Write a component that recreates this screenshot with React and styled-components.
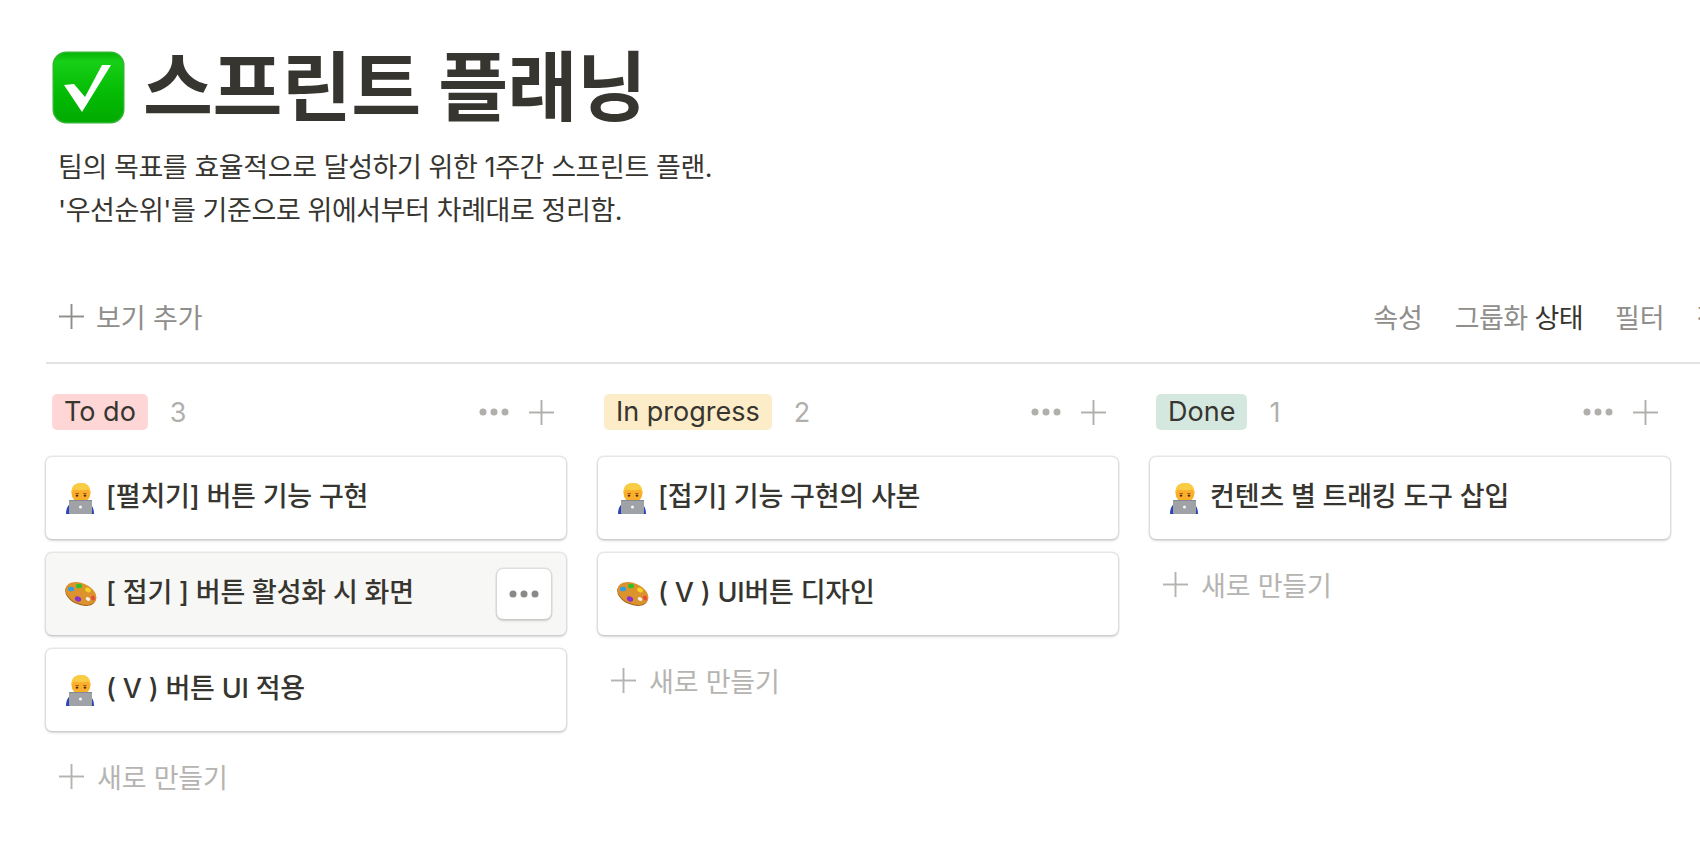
import React from 'react'
import styled, { createGlobalStyle } from 'styled-components'

const GlobalStyle = createGlobalStyle`
  html, body {
    margin: 0;
    padding: 0;
    background: #fff;
    overflow: hidden;
  }
  body {
    font-family: Inter, "Noto Sans CJK KR", sans-serif;
    color: #37352f;
  }
`

function CheckEmoji() {
  return (
    <EmojiBox size={73}>
      <svg viewBox="0 0 73 73" width="73" height="73">
        <defs>
          <linearGradient id="chk" x1="0" y1="0" x2="0" y2="1">
            <stop offset="0" stopColor="#07b507" />
            <stop offset="0.12" stopColor="#18cf18" />
            <stop offset="0.55" stopColor="#04bd04" />
            <stop offset="1" stopColor="#02aa02" />
          </linearGradient>
        </defs>
        <rect x="0.5" y="0.5" width="72" height="72" rx="14" fill="#2fb52f" />
        <rect x="2" y="2" width="69" height="69" rx="12.5" fill="url(#chk)" />
        <path d="M59 14 L50 14 L33 46 L22 33 L12 34 L30 61 Z" fill="#fff" />
      </svg>
    </EmojiBox>
  )
}

function DevEmoji() {
  return (
    <EmojiBox size={34}>
      <svg viewBox="1 0 34 34" width="34" height="34">
        <path d="M3 34 C3 28 5 24 10 23 L24 23 C29 24 31 28 31 34 Z" fill="#2b46b8" />
        <ellipse cx="18" cy="13" rx="9.5" ry="10" fill="#fbae2c" />
        <path d="M8.5 14 C7.5 6 12 3 18 3 C24 3 28 6 27.5 14 C26.5 11 26 10 25 9.5 C20 11 14 10 11 9.5 C10 10 9.5 11 8.5 14 Z" fill="#f8cc45" />
        <rect x="12.5" y="13" width="3.5" height="1" fill="#a5650f" />
        <rect x="20" y="13" width="3.5" height="1" fill="#a5650f" />
        <circle cx="14" cy="15.6" r="1.2" fill="#4a2c0c" />
        <circle cx="22" cy="15.6" r="1.2" fill="#4a2c0c" />
        <rect x="6" y="20" width="23" height="14" rx="1" fill="#9fa2a7" />
        <rect x="6" y="20" width="23" height="1" fill="#85888d" />
        <circle cx="17.5" cy="27" r="1.6" fill="#f4f4f4" />
      </svg>
    </EmojiBox>
  )
}

function PaletteEmoji() {
  return (
    <EmojiBox size={34}>
      <svg viewBox="0 0 34 34" width="34" height="34">
        <g transform="rotate(24 17 17.5)">
          <ellipse cx="17" cy="18.4" rx="16.2" ry="10.4" fill="#a9651b" />
          <ellipse cx="17" cy="17.5" rx="16.2" ry="10.2" fill="#dc922d" />
        </g>
        <ellipse cx="24" cy="23" rx="2.4" ry="1.7" fill="#f5f0e6" transform="rotate(30 24 23)" />
        <ellipse cx="7" cy="13" rx="3" ry="2.3" fill="#2d9fe3" />
        <ellipse cx="15" cy="10" rx="3" ry="2.3" fill="#2fc02a" />
        <ellipse cx="24" cy="14" rx="3" ry="2.1" fill="#f7d422" transform="rotate(25 24 14)" />
        <ellipse cx="29" cy="22" rx="2" ry="2.6" fill="#ea4a3a" transform="rotate(-25 29 22)" />
        <ellipse cx="14" cy="23" rx="3.3" ry="2.6" fill="#8b33c9" transform="rotate(25 14 23)" />
      </svg>
    </EmojiBox>
  )
}

function Plus({ size = 25 }) {
  return (
    <svg viewBox="0 0 26 26" width={size} height={size}>
      <rect x="0" y="12" width="26" height="2" fill="currentColor" />
      <rect x="12" y="0" width="2" height="26" fill="currentColor" />
    </svg>
  )
}

function Dots() {
  return (
    <svg viewBox="0 0 30 8" width="30" height="8">
      <circle cx="4" cy="4" r="3.5" fill="currentColor" />
      <circle cx="15" cy="4" r="3.5" fill="currentColor" />
      <circle cx="26" cy="4" r="3.5" fill="currentColor" />
    </svg>
  )
}

const columns = [
  {
    name: 'To do',
    color: '#ffd6d6',
    cards: [
      { emoji: 'dev', title: '[펼치기] 버튼 기능 구현' },
      { emoji: 'palette', title: '[ 접기 ] 버튼 활성화 시 화면', hover: true },
      { emoji: 'dev', title: '( V ) 버튼 UI 적용' },
    ],
  },
  {
    name: 'In progress',
    color: '#fdecc8',
    cards: [
      { emoji: 'dev', title: '[접기] 기능 구현의 사본' },
      { emoji: 'palette', title: '( V ) UI버튼 디자인' },
    ],
  },
  {
    name: 'Done',
    color: '#d5e8e0',
    cards: [{ emoji: 'dev', title: '컨텐츠 별 트래킹 도구 삽입' }],
  },
]

function App() {
  return (
    <Page>
      <GlobalStyle />
      <TitleRow>
        <CheckEmoji />
        <Title>스프린트 플래닝</Title>
      </TitleRow>
      <Description>
        <p>팀의 목표를 효율적으로 달성하기 위한 1주간 스프린트 플랜.</p>
        <p>'우선순위'를 기준으로 위에서부터 차례대로 정리함.</p>
      </Description>
      <Toolbar>
        <AddView>
          <Plus />
          보기 추가
        </AddView>
        <ToolGroup>
          <span>속성</span>
          <GroupBy>
            그룹화 <strong>상태</strong>
          </GroupBy>
          <span>필터</span>
          <span>정렬</span>
        </ToolGroup>
      </Toolbar>
      <Board>
        {columns.map((col) => (
          <Column key={col.name}>
            <ColumnHeader>
              <Tag color={col.color}>{col.name}</Tag>
              <Count>{col.cards.length}</Count>
              <HeaderActions>
                <Dots />
                <Plus />
              </HeaderActions>
            </ColumnHeader>
            <CardList>
              {col.cards.map((card) => (
                <Card key={card.title} $hover={card.hover}>
                  {card.emoji === 'dev' ? <DevEmoji /> : <PaletteEmoji />}
                  <CardTitle>{card.title}</CardTitle>
                  {card.hover && (
                    <CardMenu>
                      <Dots />
                    </CardMenu>
                  )}
                </Card>
              ))}
            </CardList>
            <NewItem>
              <Plus />
              새로 만들기
            </NewItem>
          </Column>
        ))}
      </Board>
    </Page>
  )
}

const Page = styled.div`
  width: 1700px;
  height: 852px;
  overflow: hidden;
  box-sizing: border-box;
  padding: 42px 0 0 46px;
`

const TitleRow = styled.div`
  display: flex;
  align-items: center;
  gap: 18px;
  height: 90px;
  padding-left: 6px;
`

const EmojiBox = styled.span`
  display: inline-flex;
  flex: none;
  width: ${(p) => p.size}px;
  height: ${(p) => p.size}px;
`

const Title = styled.h1`
  margin: 0;
  font-size: 76px;
  line-height: 90px;
  font-weight: 700;
  letter-spacing: -0.5px;
  color: #37352f;
  white-space: nowrap;
`

const Description = styled.div`
  margin-top: 14px;
  padding-left: 12px;
  font-size: 27px;
  line-height: 43px;
  letter-spacing: -0.42px;

  p {
    margin: 0;
  }
`

const Toolbar = styled.div`
  display: flex;
  align-items: center;
  justify-content: space-between;
  width: 1700px;
  height: 84px;
  margin-top: 42px;
  padding-bottom: 4px;
  border-bottom: 2px solid #e3e3e1;
  color: #8f8e8b;
  font-size: 27px;
  letter-spacing: -0.1px;
`

const AddView = styled.div`
  display: flex;
  align-items: center;
  gap: 12px;
  padding-left: 13px;
`

const ToolGroup = styled.div`
  display: flex;
  gap: 32px;
  white-space: nowrap;
`

const GroupBy = styled.span`
  letter-spacing: -0.6px;

  strong {
    font-weight: 400;
    color: #37352f;
  }
`

const Board = styled.div`
  display: flex;
  gap: 32px;
`

const Column = styled.section`
  width: 520px;
  flex: none;
`

const ColumnHeader = styled.header`
  display: flex;
  align-items: center;
  height: 36px;
  margin-top: 30px;
  padding-left: 6px;
`

const Tag = styled.span`
  background: ${(p) => p.color};
  border-radius: 5px;
  padding: 0 12px;
  height: 36px;
  line-height: 36px;
  font-size: 27px;
  color: #37352f;
`

const Count = styled.span`
  margin-left: 22px;
  font-size: 27px;
  color: #b0afac;
`

const HeaderActions = styled.div`
  display: flex;
  align-items: center;
  gap: 20px;
  margin-left: auto;
  padding-right: 12px;
  color: #b0afac;
`

const CardList = styled.div`
  display: flex;
  flex-direction: column;
  gap: 14px;
  margin-top: 27px;
`

const Card = styled.article`
  position: relative;
  box-sizing: border-box;
  display: flex;
  align-items: flex-start;
  gap: 8px;
  height: 82px;
  padding: 23px 18px 0;
  border-radius: 6px;
  background: ${(p) => (p.$hover ? '#f7f7f5' : '#fff')};
  box-shadow: 0 0 0 1.5px rgba(15, 15, 15, 0.1), 0 2px 3px rgba(15, 15, 15, 0.13);
`

const CardTitle = styled.span`
  font-size: 27px;
  line-height: 34px;
  font-weight: 500;
  letter-spacing: -0.2px;
  color: #37352f;
  white-space: nowrap;
`

const CardMenu = styled.div`
  position: absolute;
  top: 16px;
  right: 15px;
  display: flex;
  align-items: center;
  justify-content: center;
  width: 54px;
  height: 50px;
  border-radius: 6px;
  background: #fff;
  color: #8a8987;
  box-shadow: 0 0 0 1.5px rgba(15, 15, 15, 0.1), 0 2px 3px rgba(15, 15, 15, 0.13);
`

const NewItem = styled.div`
  display: flex;
  align-items: center;
  gap: 13px;
  height: 46px;
  margin-top: 22px;
  padding-left: 13px;
  font-size: 27px;
  letter-spacing: -0.2px;
  color: #b5b4b1;
`

export default App
